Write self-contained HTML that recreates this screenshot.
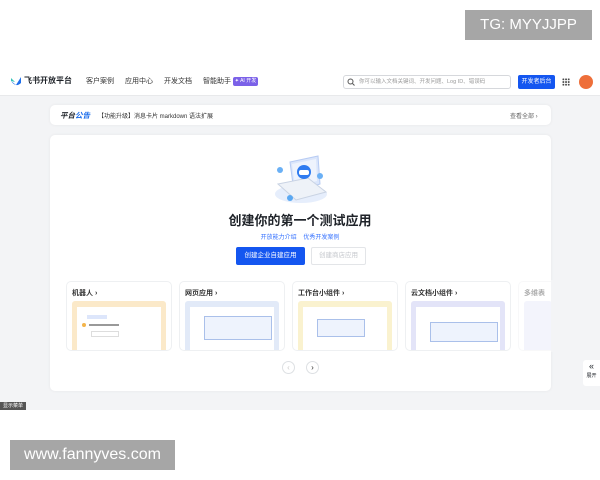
<!DOCTYPE html>
<html><head><meta charset="utf-8"><style>
*{margin:0;padding:0;box-sizing:border-box}
body{width:600px;height:480px;background:#fff;font-family:"Liberation Sans","Noto Sans CJK SC",sans-serif;position:relative;overflow:hidden;color:#1f2329}
.abs{position:absolute}
.gray{left:0;top:96px;width:600px;height:314px;background:#f3f4f6}
.nav{left:0;top:65px;width:600px;height:31px;background:#fff;border-bottom:1px solid #e8e9eb}
.card{background:#fff;border-radius:5px;box-shadow:0 0 3px rgba(0,0,0,.06)}
.sm{font-size:7px}
.app{top:281px;width:106px;height:70px;border-radius:5px;background:#fff;border:1px solid #eef0f2;overflow:hidden}
.app b{position:absolute;left:5px;top:6px;font-size:7px;font-weight:bold;color:#333}
.app .pv{position:absolute;left:5px;right:5px;top:19px;bottom:0;border-radius:3px 3px 0 0}
.app .in{position:absolute;left:5px;right:5px;top:6px;bottom:0;background:#fff}
.nv{font-size:7px;color:#333;top:76px}
</style></head><body>
<div class="abs" style="left:465px;top:10px;width:127px;height:30px;background:#a6a6a6;color:#fff;font-size:15px;line-height:30px;text-align:center">TG: MYYJJPP</div>

<div class="abs nav"></div>
<svg class="abs" style="left:10px;top:75px" width="12" height="12"><path d="M1 6 L6 10 L11 2 L11 8 Q6 13 1 6Z" fill="#1f6feb"/><path d="M1 3 L5 7 L1 6Z" fill="#35c3b8"/></svg>
<div class="abs" style="left:24px;top:75px;font-size:8px;font-weight:bold">飞书开放平台</div>
<div class="abs nv" style="left:86px">客户案例</div>
<div class="abs nv" style="left:125px">应用中心</div>
<div class="abs nv" style="left:164px">开发文档</div>
<div class="abs nv" style="left:203px">智能助手</div>
<div class="abs" style="left:233px;top:77px;width:25px;height:9px;background:#7b61e8;border-radius:2px;color:#fff;font-size:5px;line-height:9px;text-align:center">✦ AI 开发</div>
<div class="abs" style="left:343px;top:75px;width:168px;height:14px;border:1px solid #d6d8dc;border-radius:3px;font-size:5.5px;color:#999;line-height:12px;padding-left:15px">你可以输入文档关键词、开发问题、Log ID、错误码</div>
<svg class="abs" style="left:347px;top:78px" width="8" height="8"><circle cx="3.5" cy="3.5" r="2.5" fill="none" stroke="#555" stroke-width="1"/><path d="M5.5 5.5L7.5 7.5" stroke="#555"/></svg>
<div class="abs" style="left:518px;top:75px;width:37px;height:14px;background:#1456f0;border-radius:2px;color:#fff;font-size:6px;line-height:14px;text-align:center">开发者后台</div>
<div class="abs" style="left:562px;top:78px;width:8px;height:8px;background:radial-gradient(circle,#444 0.8px,transparent 1.1px) 0 0/2.7px 2.7px"></div>
<div class="abs" style="left:579px;top:75px;width:14px;height:14px;border-radius:50%;background:#ee6f3a"></div>

<div class="abs gray"></div>
<div class="abs card" style="left:50px;top:105px;width:501px;height:20px"></div>
<div class="abs" style="left:60px;top:110px;font-size:7.5px;font-weight:bold;font-style:italic">平台<span style="color:#1f6feb">公告</span></div>
<div class="abs sm" style="left:98px;top:111px;font-size:6px;color:#333">【功能升级】消息卡片 markdown 语法扩展</div>
<div class="abs" style="left:510px;top:111px;font-size:6px;color:#666">查看全部 ›</div>

<div class="abs card" style="left:50px;top:135px;width:501px;height:256px"></div>
<svg class="abs" style="left:268px;top:150px" width="66" height="58">
<ellipse cx="33" cy="44" rx="26" ry="9" fill="#e6eefc"/>
<path d="M22 12 L50 6 L52 34 L26 42Z" fill="#dbe6fb" stroke="#b7cbf3"/>
<path d="M24 14 L48 9 L49 31 L27 37Z" fill="#eef3fd"/>
<path d="M10 34 L40 28 L58 42 L28 50Z" fill="#eef2f8" stroke="#c9d3e3"/>
<circle cx="36" cy="22" r="7" fill="#2f7bf0"/>
<rect x="31" y="20" width="10" height="5" rx="2" fill="#fff"/>
<circle cx="12" cy="20" r="3" fill="#6ab0f5"/><circle cx="52" cy="26" r="3" fill="#6ab0f5"/><circle cx="22" cy="48" r="3" fill="#5aa8f2"/>
</svg>
<div class="abs" style="left:0;width:600px;top:210px;text-align:center;font-size:13px;font-weight:bold;color:#1f2329">创建你的第一个测试应用</div>
<div class="abs" style="left:0;width:600px;top:232px;text-align:center;font-size:6px;color:#3370ff">开放能力介绍&nbsp;&nbsp;&nbsp;&nbsp;优秀开发案例</div>
<div class="abs" style="left:236px;top:247px;width:69px;height:18px;background:#1456f0;border-radius:2px;color:#fff;font-size:6.5px;line-height:18px;text-align:center">创建企业自建应用</div>
<div class="abs" style="left:311px;top:247px;width:55px;height:18px;border:1px solid #e3e5e8;border-radius:2px;color:#c4c7cc;font-size:6.5px;line-height:16px;text-align:center">创建商店应用</div>

<div class="abs app" style="left:66px"><b>机器人 ›</b><div class="pv" style="background:#fbe9c9"><div class="in">
<div class="abs" style="left:10px;top:8px;width:20px;height:4px;background:#dde6fb"></div>
<div class="abs" style="left:5px;top:16px;width:4px;height:4px;border-radius:50%;background:#f3b44b"></div>
<div class="abs" style="left:12px;top:17px;width:30px;height:2px;background:#999"></div>
<div class="abs" style="left:14px;top:24px;width:28px;height:6px;border:1px solid #ddd"></div></div></div></div>
<div class="abs app" style="left:179px"><b>网页应用 ›</b><div class="pv" style="background:#e2eaf8"><div class="in"><div class="abs" style="left:14px;top:9px;width:68px;height:24px;border:1px solid #aac0ea;background:#eef3fd"></div></div></div></div>
<div class="abs app" style="left:292px"><b>工作台小组件 ›</b><div class="pv" style="background:#faf2cf"><div class="in"><div class="abs" style="left:14px;top:12px;width:48px;height:18px;border:1px solid #aac0ea;background:#eef3fd"></div></div></div></div>
<div class="abs app" style="left:405px"><b>云文档小组件 ›</b><div class="pv" style="background:#e3e4f8"><div class="in"><div class="abs" style="left:14px;top:15px;width:68px;height:20px;border:1px solid #aac0ea;background:#eef3fd"></div></div></div></div>
<div class="abs app" style="left:518px;width:40px;opacity:.4"><b>多维表</b><div class="pv" style="background:#e3e4f8"></div></div>
<div class="abs" style="left:551px;top:280px;width:49px;height:72px;background:#f3f4f6"></div>

<div class="abs" style="left:282px;top:361px;width:13px;height:13px;border-radius:50%;border:1px solid #dde0e3;font-size:8px;line-height:11px;text-align:center;color:#ccc">‹</div>
<div class="abs" style="left:306px;top:361px;width:13px;height:13px;border-radius:50%;border:1px solid #dde0e3;font-size:8px;line-height:11px;text-align:center;color:#333">›</div>
<div class="abs" style="left:583px;top:360px;width:17px;height:26px;background:#fff;border-radius:3px 0 0 3px;text-align:center;font-size:9px;line-height:12px">«<div style="font-size:5px;line-height:8px">展开</div></div>
<div class="abs" style="left:0;top:402px;width:26px;height:8px;background:#555;color:#fff;font-size:5px;line-height:8px;text-align:center">显示菜单</div>

<div class="abs" style="left:10px;top:440px;width:165px;height:30px;background:#a6a6a6;color:#fff;font-size:16px;line-height:30px;text-align:center">www.fannyves.com</div>
</body></html>
